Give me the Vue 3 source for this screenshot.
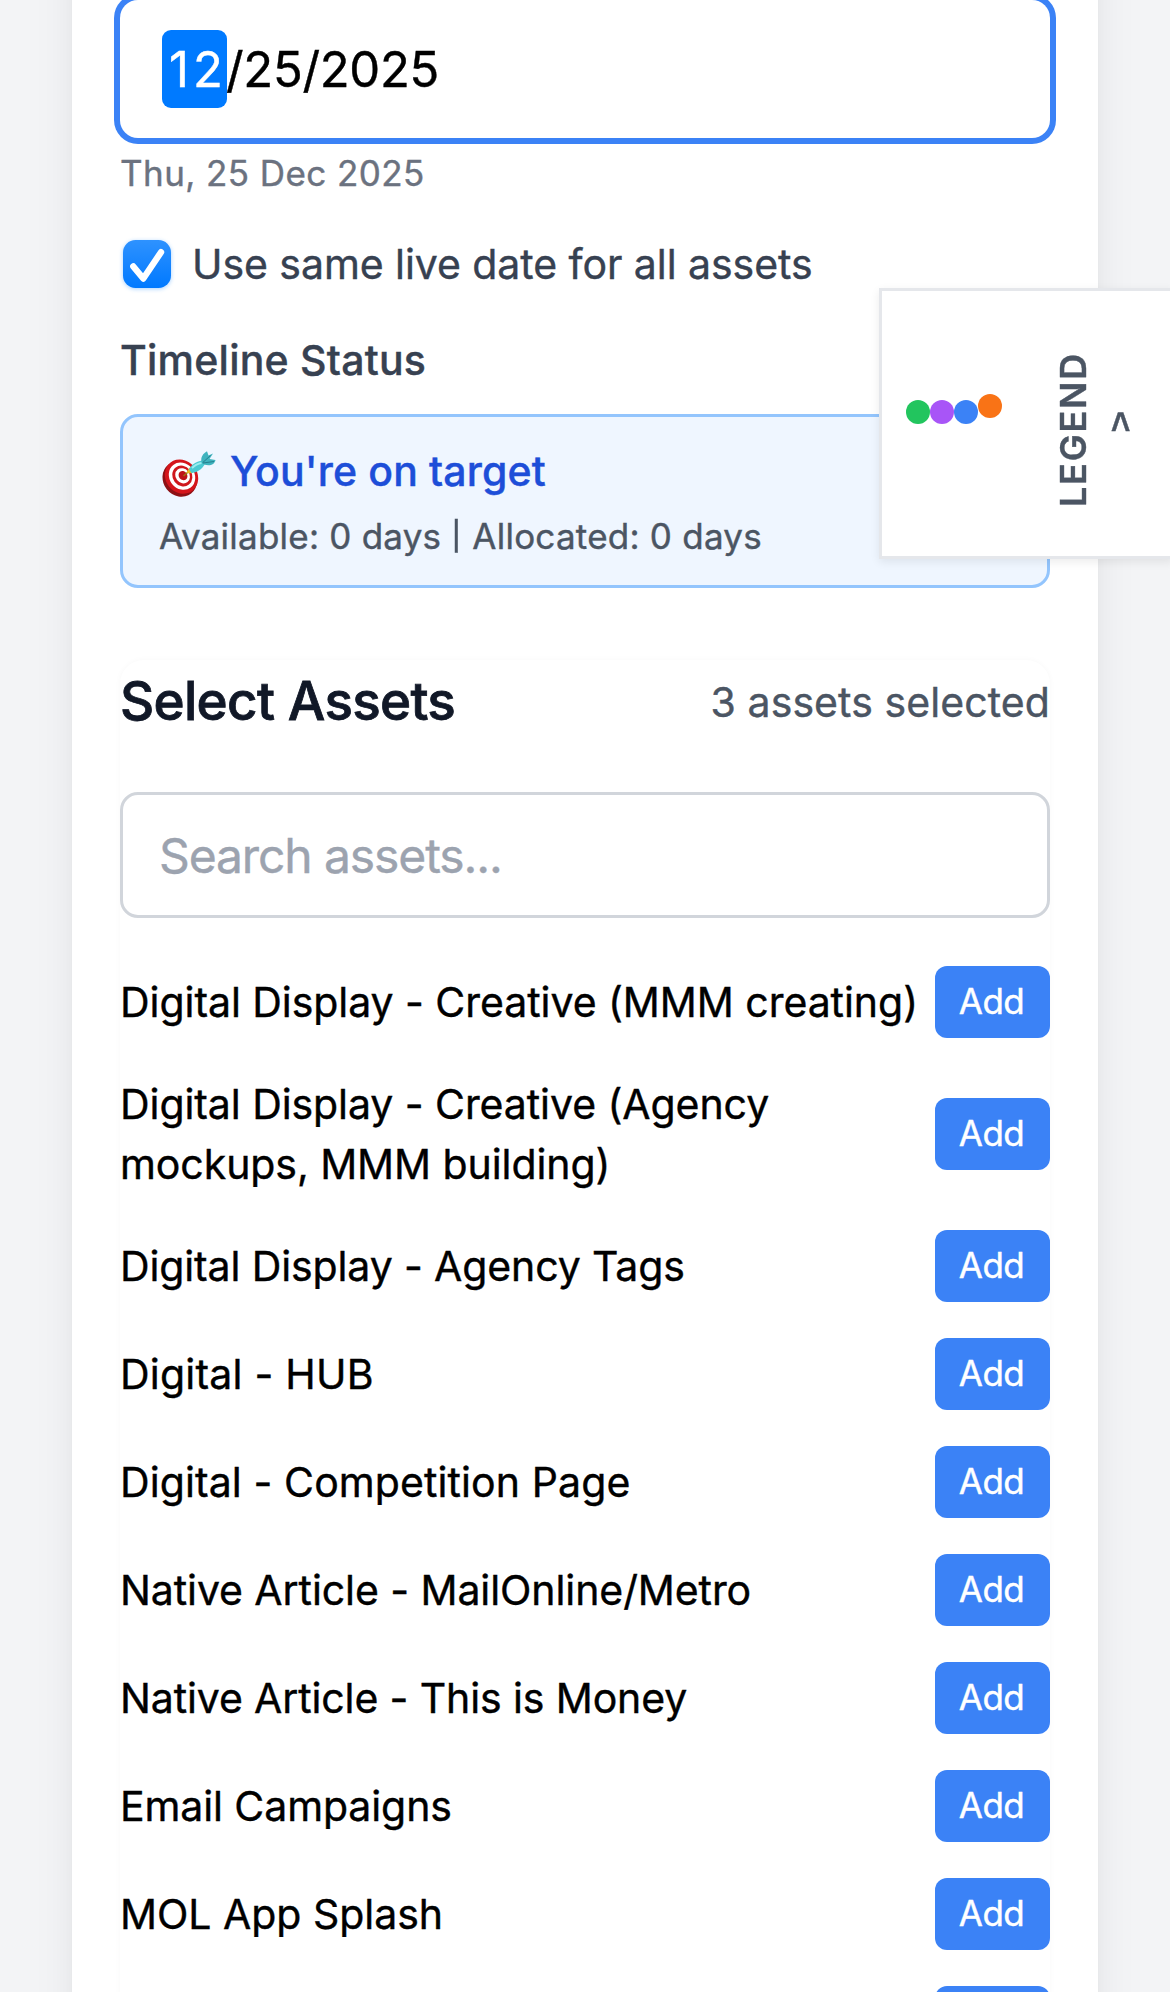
<script setup>
const assets = [
  { name: 'Digital Display - Creative (MMM creating)', track: -0.05 },
  { name: 'Digital Display - Creative (Agency mockups, MMM building)', track: -0.07 },
  { name: 'Digital Display - Agency Tags', track: -0.12 },
  { name: 'Digital - HUB', track: 0.22 },
  { name: 'Digital - Competition Page', track: 0.1 },
  { name: 'Native Article - MailOnline/Metro', track: -0.08 },
  { name: 'Native Article - This is Money', track: -0.12 },
  { name: 'Email Campaigns', track: -0.1 },
  { name: 'MOL App Splash', track: -0.03 },
]
const dots = ['green', 'purple', 'blue', 'orange']
</script>

<template>
  <div class="page">
    <main class="card">
      <div class="date-input">
        <span class="month">12</span><span class="rest">/25/2025</span>
      </div>
      <p class="date-note">Thu, 25 Dec 2025</p>

      <label class="same-date">
        <svg class="checkbox" viewBox="0 0 60 60" aria-hidden="true">
          <defs>
            <linearGradient id="check-fill" x1="0" y1="0" x2="0" y2="1">
              <stop offset="0" stop-color="#2e92ff" />
              <stop offset="1" stop-color="#0079ff" />
            </linearGradient>
          </defs>
          <rect x="6" y="6" width="48" height="48" rx="12.5" fill="url(#check-fill)" />
          <path d="M16.3 32.5 L26.3 44.5 L44 18.2" fill="none" stroke="#fff" stroke-width="6.4" stroke-linecap="round" stroke-linejoin="round" />
        </svg>
        <span>Use same live date for all assets</span>
      </label>

      <h3 class="status-label">Timeline Status</h3>
      <section class="status">
        <div class="status-title">
          <svg class="target" viewBox="0 0 54 46" aria-hidden="true">
            <ellipse cx="17.8" cy="28" rx="16.6" ry="18.4" transform="rotate(-38 17.8 28)" fill="#8d1014" />
            <ellipse cx="19.5" cy="25.6" rx="16" ry="17.8" transform="rotate(-38 19.5 25.6)" fill="#d4151b" />
            <ellipse cx="20" cy="25.2" rx="12.6" ry="14.2" transform="rotate(-38 20 25.2)" fill="#fff" />
            <ellipse cx="20.3" cy="25" rx="9.6" ry="10.8" transform="rotate(-38 20.3 25)" fill="#cf171c" />
            <ellipse cx="20.6" cy="24.8" rx="7" ry="8" transform="rotate(-38 20.6 24.8)" fill="#fff" />
            <ellipse cx="21" cy="24.6" rx="4.2" ry="4.8" transform="rotate(-38 21 24.6)" fill="#bd1117" />
            <path d="M21.5 25 L29 18.5" stroke="#9a7410" stroke-width="1.6" />
            <path d="M24.5 21.5 L27.5 16.5 L31 21.5 L27 22.5 Z" fill="#e9b91d" />
            <path d="M27 18.5 C29.5 13 36 9.5 41 9.5 L43 12.5 C41 18 34 22 29.5 22 Z" fill="#4bc9d2" />
            <path d="M30 17 C33 14 36 12.5 39.5 12" stroke="#9cecef" stroke-width="1.8" fill="none" />
            <path d="M39.5 11 C38.5 6 41 2.5 45 0.2 L46.5 4.5 L51 2.5 L47.5 8 L53.5 9 C52.5 13.5 48 15.5 42 13.5 Z" fill="#3fb3be" />
            <path d="M40.5 11.8 L48.5 4.5 M41 12 L52 10.5" stroke="#247f8e" stroke-width="1" />
          </svg>
          <span>You're on target</span>
        </div>
        <p class="status-detail">Available: 0 days <span class="divider">|</span> Allocated: 0 days</p>
      </section>

      <section class="assets">
        <header class="assets-head">
          <h2>Select Assets</h2>
          <span class="count">3 assets selected</span>
        </header>
        <div class="search">Search assets...</div>
        <ul class="list">
          <li v-for="asset in assets" :key="asset.name" class="row">
            <span class="name" :style="{ letterSpacing: asset.track + 'px' }">{{ asset.name }}</span>
            <button class="add" type="button">Add</button>
          </li>
          <li class="row next"><button class="add" type="button"></button></li>
        </ul>
      </section>
    </main>

    <aside class="legend">
      <div class="dots">
        <i v-for="dot in dots" :key="dot" :class="dot"></i>
      </div>
      <span class="legend-text">LEGEND</span>
      <span class="legend-arrow">^</span>
    </aside>
  </div>
</template>

<style scoped>
.page {
  position: relative;
  box-sizing: border-box;
  height: 1992px;
  overflow: hidden;
  background: #f3f4f6;
  font-family: Inter, "Liberation Sans", sans-serif;
  font-size: 41px;
  color: #000;
  -webkit-text-stroke-width: 0.4px;
}
.card {
  box-sizing: border-box;
  margin: -120px 72px 0;
  padding: 120px 48px;
  background: #fff;
  box-shadow: 0 30px 45px -9px rgba(0, 0, 0, 0.1), 0 12px 18px -12px rgba(0, 0, 0, 0.1);
}
p, h2, h3, ul {
  margin: 0;
  padding: 0;
}
.date-input {
  display: flex;
  align-items: center;
  box-sizing: border-box;
  height: 138px;
  padding-left: 42px;
  border-radius: 18px;
  box-shadow: 0 0 0 6px #3b82f6;
  font-size: 49px;
  line-height: 76px;
}
.month {
  box-sizing: border-box;
  width: 65px;
  padding: 2px 0 0 7px;
  border-radius: 9px;
  background: #007aff;
  color: #fff;
  letter-spacing: 4px;
  white-space: nowrap;
}
.rest {
  padding-top: 2px;
  margin-left: -1px;
  letter-spacing: -0.3px;
}
.date-note {
  margin-top: 11px;
  font-size: 35px;
  line-height: 48px;
  letter-spacing: 0.42px;
  color: #6b7280;
}
.same-date {
  display: flex;
  align-items: center;
  height: 60px;
  margin-top: 37px;
  letter-spacing: -0.06px;
  color: #374151;
}
.checkbox {
  width: 60px;
  height: 60px;
  margin: 0 15px 0 -3px;
  filter: drop-shadow(0 1px 2px rgba(0, 122, 255, 0.35));
}
.status-label {
  margin-top: 36px;
  font-size: 41px;
  font-weight: 500;
  line-height: 60px;
  letter-spacing: 0.24px;
  color: #374151;
}
.status {
  box-sizing: border-box;
  height: 174px;
  margin-top: 24px;
  padding: 24px 36px;
  border: 3px solid #93c5fd;
  border-radius: 18px;
  background: #eff6ff;
}
.status-title {
  display: flex;
  align-items: center;
  height: 60px;
  font-weight: 500;
  letter-spacing: 0.14px;
  color: #1d4ed8;
}
.target {
  width: 54px;
  height: 46px;
  margin: 5px 14px 0 3px;
}
.status-detail {
  margin-top: 11px;
  font-size: 35px;
  line-height: 48px;
  letter-spacing: 0.23px;
  color: #4b5563;
}
.divider {
  display: inline-block;
  margin-left: -1px;
  line-height: 30px;
  transform: scaleY(0.8);
}
.assets {
  margin-top: 72px;
  border-radius: 24px;
  box-shadow: 0 0 6px rgba(0, 0, 0, 0.03);
}
.assets-head {
  display: flex;
  align-items: center;
  justify-content: space-between;
  height: 84px;
}
.assets-head h2 {
  margin-top: -2px;
  font-size: 53px;
  font-weight: 500;
  letter-spacing: -0.7px;
  color: #111827;
  -webkit-text-stroke-width: 0.8px;
}
.count {
  letter-spacing: 0.08px;
  color: #4b5563;
}
.search {
  box-sizing: border-box;
  height: 126px;
  margin-top: 48px;
  padding-left: 36px;
  border: 3px solid #d1d5db;
  border-radius: 18px;
  font-size: 48px;
  line-height: 122px;
  letter-spacing: -1.11px;
  color: #9ca3af;
}
.list {
  display: flex;
  flex-direction: column;
  gap: 36px;
  margin-top: 48px;
  list-style: none;
}
.row {
  display: flex;
  align-items: center;
  justify-content: space-between;
  min-height: 72px;
}
.next {
  justify-content: flex-end;
}
.name {
  flex: 1;
  line-height: 60px;
}
.add {
  flex: none;
  box-sizing: border-box;
  width: 115px;
  height: 72px;
  padding: 0 2px 2px 0;
  border: 0;
  border-radius: 12px;
  background: #3b82f6;
  color: #fff;
  font: 400 35px/70px Inter, "Liberation Sans", sans-serif;
  letter-spacing: -0.5px;
  -webkit-text-stroke-width: 0.4px;
}
.legend {
  position: absolute;
  top: 288px;
  right: -3px;
  display: flex;
  align-items: center;
  box-sizing: border-box;
  width: 294px;
  height: 271px;
  padding-left: 24px;
  border: 3px solid #e5e7eb;
  background: #fff;
  box-shadow: 0 3px 9px rgba(0, 0, 0, 0.08);
  color: #4b5563;
}
.dots {
  display: flex;
  margin: 0 50px 24px 0;
}
.dots i {
  width: 24px;
  height: 24px;
  border-radius: 50%;
}
.green { background: #22c55e; }
.purple { background: #a855f7; }
.blue { background: #3b82f6; }
.orange {
  background: #f97316;
  transform: translateY(-6px);
}
.legend-text {
  writing-mode: vertical-rl;
  transform: rotate(180deg);
  margin-top: 12px;
  font-size: 36px;
  font-weight: 600;
  line-height: 42px;
  letter-spacing: 1.8px;
}
.legend-arrow {
  margin: 9px 0 0 17px;
  font: 700 33px/36px "Liberation Sans", Arial, sans-serif;
  transform: scaleY(1.3);
}
</style>
